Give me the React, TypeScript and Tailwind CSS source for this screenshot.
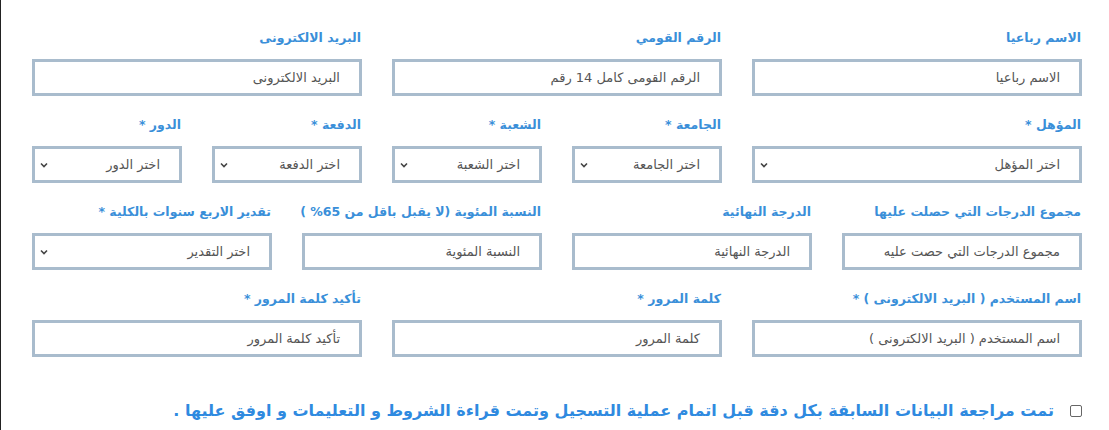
import React from "react";

type F = { label: string; ph: string; span: string; select?: boolean };

const rows: F[] = [
  { label: "الاسم رباعيا", ph: "الاسم رباعيا", span: "col-span-4" },
  { label: "الرقم القومي", ph: "الرقم القومى كامل 14 رقم", span: "col-span-4" },
  { label: "البريد الالكترونى", ph: "البريد الالكترونى", span: "col-span-4" },
  { label: "المؤهل *", ph: "اختر المؤهل", span: "col-span-4", select: true },
  { label: "الجامعة *", ph: "اختر الجامعة", span: "col-span-2", select: true },
  { label: "الشعبة *", ph: "اختر الشعبة", span: "col-span-2", select: true },
  { label: "الدفعة *", ph: "اختر الدفعة", span: "col-span-2", select: true },
  { label: "الدور *", ph: "اختر الدور", span: "col-span-2", select: true },
  { label: "مجموع الدرجات التي حصلت عليها", ph: "مجموع الدرجات التي حصت عليه", span: "col-span-3" },
  { label: "الدرجة النهائية", ph: "الدرجة النهائية", span: "col-span-3" },
  { label: "النسبة المئوية (لا يقبل باقل من 65% )", ph: "النسبة المئوية", span: "col-span-3" },
  { label: "تقدير الاربع سنوات بالكلية *", ph: "اختر التقدير", span: "col-span-3", select: true },
  { label: "اسم المستخدم ( البريد الالكترونى ) *", ph: "اسم المستخدم ( البريد الالكترونى )", span: "col-span-4" },
  { label: "كلمة المرور *", ph: "كلمة المرور", span: "col-span-4" },
  { label: "تأكيد كلمة المرور *", ph: "تأكيد كلمة المرور", span: "col-span-4" },
];

function Field({ f }: { f: F }) {
  return (
    <div className={f.span + " flex flex-col"}>
      <label className="text-[12.5px] leading-[20px] font-bold text-[#3a8fd9] mb-[11px] pr-[1px] whitespace-nowrap">{f.label}</label>
      <div className="h-[37px] border-[3px] border-[#a9bccd] bg-white flex items-center pr-[19px] pl-[4px]">
        <span className="text-[13px] text-[#555] whitespace-nowrap flex-1">{f.ph}</span>
        {f.select && (
          <svg width="10" height="10" viewBox="0 0 10 10">
            <path d="M2 3.5 L5 6.5 L8 3.5" fill="none" stroke="#444" strokeWidth="1.6" />
          </svg>
        )}
      </div>
    </div>
  );
}

export default function App() {
  return (
    <div
      dir="rtl"
      className="w-[1109px] h-[430px] bg-white border-l border-[#222] pt-[28px] pr-[27px] pl-[31px] overflow-hidden"
      style={{ fontFamily: '"DejaVu Sans", sans-serif' }}
    >
      <div className="grid grid-cols-12 gap-x-[30px] gap-y-[19px]">
        {rows.map((f, i) => (
          <Field key={i} f={f} />
        ))}
      </div>
      <div className="mt-[43px] flex items-center gap-[16px]">
        <span className="w-[12px] h-[12px] border border-[#666] rounded-[2px] bg-white shrink-0"></span>
        <span className="text-[16px] leading-[22px] font-bold text-[#2f8ae0] whitespace-nowrap">
          تمت مراجعة البيانات السابقة بكل دقة قبل اتمام عملية التسجيل وتمت قراءة الشروط و التعليمات و اوفق عليها .
        </span>
      </div>
    </div>
  );
}
